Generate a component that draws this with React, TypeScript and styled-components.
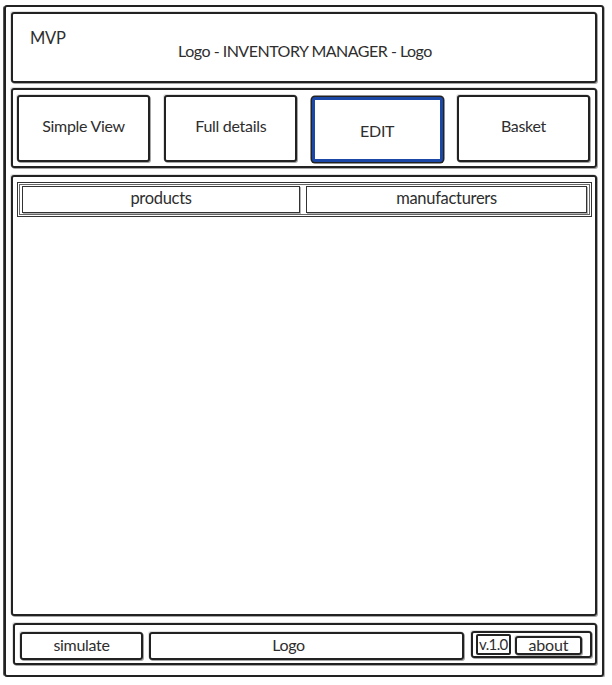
import React from "react";
import styled, { createGlobalStyle, css } from "styled-components";

const Global = createGlobalStyle`
  html, body { margin: 0; padding: 0; background: #ffffff; }
  body { font-family: "Lato", "Open Sans", sans-serif; color: #2e2e2e; }
  * { box-sizing: border-box; }
`;

const sketch = css`
  border: 2px solid #222;
  border-radius: 3px;
  box-shadow: 1px 1px 0 0 rgba(0, 0, 0, 0.35), -1px -1px 0 0 rgba(0, 0, 0, 0.12);
`;

const Frame = styled.div`
  ${sketch};
  margin: 5px 0 0 4px;
  width: 600px;
  height: 672px;
  padding: 5px 5px 10px 5px;
  display: flex;
  flex-direction: column;
  gap: 5px;
  box-shadow: -2px 0 0 -1px #555, 1px 1px 0 0 rgba(0, 0, 0, 0.3);
`;

const Header = styled.header`
  ${sketch};
  height: 71px;
  flex: none;
  position: relative;
  display: flex;
  align-items: center;
  justify-content: center;
`;

const Badge = styled.span`
  position: absolute;
  left: 17px;
  top: 14px;
  font-size: 16.5px;
  letter-spacing: -0.3px;
`;

const Title = styled.h1`
  margin: 6px 0 0 2px;
  font-weight: 400;
  font-size: 16px;
  letter-spacing: -0.5px;
`;

const Nav = styled.nav`
  ${sketch};
  height: 80px;
  flex: none;
  padding: 5px 5px 4px 4px;
  display: flex;
  justify-content: space-between;
  margin-bottom: 2px;
`;

const NavButton = styled.button<{ $active?: boolean }>`
  ${sketch};
  width: 133px;
  height: 67px;
  background: #fff;
  font-family: inherit;
  font-size: 16px;
  letter-spacing: -0.3px;
  color: #2e2e2e;
  padding: 0 0 ${(p) => (p.$active ? "0" : "6px")} 0;
  ${(p) =>
    p.$active &&
    css`
      border: 3px solid #1b47a6;
      box-shadow: 0 0 0 1.5px #222;
      margin-top: 2px;
      width: 131px;
      height: 65px;
      padding-top: 2px;
    `}
`;

const Content = styled.main`
  ${sketch};
  flex: 1;
  padding: 5px 3px 0 4px;
  margin-bottom: 2px;
`;

const TabBar = styled.div`
  border: 1px solid #333;
  box-shadow: inset 0 0 0 1px #fff, inset 0 0 0 2px #666;
  padding: 3px 4px 3px 4px;
  display: flex;
  gap: 6px;
  height: 35px;
`;

const Tab = styled.div<{ $w: number }>`
  width: ${(p) => p.$w}px;
  border: 1.5px solid #333;
  box-shadow: 1px 1px 0 0 rgba(0, 0, 0, 0.3);
  display: flex;
  align-items: center;
  justify-content: center;
  font-size: 16.5px;
  letter-spacing: -0.3px;
  padding-bottom: 3px;
`;

const Footer = styled.footer`
  ${sketch};
  height: 42px;
  flex: none;
  margin-left: 2px;
  padding: 0 3px 0 5px;
  display: flex;
  align-items: center;
  gap: 6px;
`;

const FootBox = styled.div<{ $w?: number; $shift?: number }>`
  ${sketch};
  height: 28px;
  ${(p) => (p.$w ? `width: ${p.$w}px;` : "flex: 1;")}
  display: flex;
  align-items: center;
  justify-content: center;
  font-size: 16px;
  letter-spacing: -0.3px;
  padding: 0 ${(p) => p.$shift ?? 0}px 3px 0;
  margin-top: 3px;
`;

const Group = styled.div`
  ${sketch};
  margin-left: 1px;
  width: 121px;
  height: 27px;
  display: flex;
  align-items: center;
  gap: 4px;
  padding: 0 8px 0 3px;
`;

const Version = styled.span`
  border: 2px solid #222;
  border-radius: 2px;
  font-size: 15px;
  line-height: 17px;
  padding: 0 1px;
  letter-spacing: -0.6px;
`;

const About = styled.span`
  ${sketch};
  flex: 1;
  height: 19px;
  margin-top: 3px;
  font-size: 16px;
  letter-spacing: -0.2px;
  display: flex;
  align-items: center;
  justify-content: center;
  line-height: 1;
  padding-bottom: 1px;
`;

export default function App() {
  return (
    <>
      <Global />
      <Frame>
        <Header>
          <Badge>MVP</Badge>
          <Title>Logo - INVENTORY MANAGER - Logo</Title>
        </Header>
        <Nav>
          <NavButton>Simple View</NavButton>
          <NavButton>Full details</NavButton>
          <NavButton $active>EDIT</NavButton>
          <NavButton>Basket</NavButton>
        </Nav>
        <Content>
          <TabBar>
            <Tab $w={281}>products</Tab>
            <Tab $w={284}>manufacturers</Tab>
          </TabBar>
        </Content>
        <Footer>
          <FootBox $w={123}>simulate</FootBox>
          <FootBox $shift={36}>Logo</FootBox>
          <Group>
            <Version>v.1.0</Version>
            <About>about</About>
          </Group>
        </Footer>
      </Frame>
    </>
  );
}
